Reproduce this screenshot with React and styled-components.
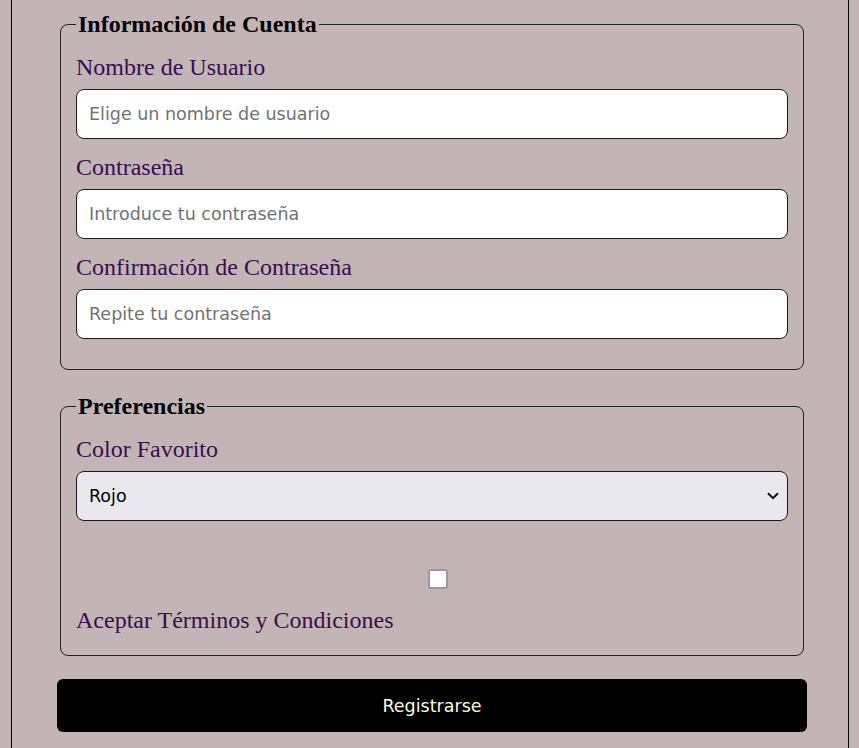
import React from "react";
import styled, { createGlobalStyle } from "styled-components";

const GlobalStyle = createGlobalStyle`
    body {
        margin : 0;
        background : #c3b5b5;
    }
`

const Page = styled.div`
    margin-left : 11px;
    width : 838px;
    box-sizing : border-box;
    min-height : 100vh;
    padding : 11px 41px 16px 45px;
    border-left : 1px solid #000;
    border-right : 1px solid #000;
`

const Fieldset = styled.fieldset`
    margin : 0 3px 23px;
    padding : 16px 15px 15px;
    border : 1px solid #222;
    border-radius : 8px;
    min-width : 0;
`

const Legend = styled.legend`
    padding : 0 2px;
    font-family : "Liberation Serif", "Times New Roman", serif;
    font-weight : 700;
    font-size : 24px;
    color : #000;
`

const Field = styled.div`
    margin-bottom : ${(p) => p.$last ? "6px" : "15px"};
`

const Label = styled.label`
    display : block;
    margin-bottom : 8px;
    font-family : "Liberation Serif", "Times New Roman", serif;
    font-size : 24px;
    color : #3a0d4f;
`

const Input = styled.input`
    display : block;
    width : 100%;
    height : 50px;
    box-sizing : border-box;
    padding : 0 12px;
    border : 1px solid #1a1a1a;
    border-radius : 8px;
    background : #fff;
    font-family : "DejaVu Sans", Verdana, sans-serif;
    font-size : 17.5px;
    color : #000;
    &::placeholder {
        color : #727272;
    }
`

const SelectWrap = styled.div`
    position : relative;
`

const Select = styled.select`
    display : block;
    width : 100%;
    height : 50px;
    box-sizing : border-box;
    padding : 0 12px;
    appearance : none;
    border : 1px solid #1a1a1a;
    border-radius : 8px;
    background : #e9e8ee;
    font-family : "DejaVu Sans", Verdana, sans-serif;
    font-size : 17.5px;
    color : #000;
`

const Chevron = styled.svg`
    position : absolute;
    right : 9px;
    top : 21px;
    pointer-events : none;
`

const CheckRow = styled.div`
    display : flex;
    justify-content : center;
    padding : 33px 0 0 12px;
    margin-bottom : 18px;
`

const Checkbox = styled.input`
    appearance : none;
    margin : 0;
    width : 20px;
    height : 20px;
    box-sizing : border-box;
    border : 2px solid #9b97a8;
    border-radius : 3px;
    background : #fff;
`

const TermsLabel = styled(Label)`
    margin-bottom : 0;
`

const Button = styled.button`
    display : block;
    width : 100%;
    height : 53px;
    border : none;
    border-radius : 6px;
    background : #000;
    color : #fdfbe2;
    font-family : "DejaVu Sans", Verdana, sans-serif;
    font-size : 17.5px;
    cursor : pointer;
`

const App = () => {
    return (
        <>
            <GlobalStyle />
            <Page>
                <form onSubmit={(e) => e.preventDefault()}>
                    <Fieldset>
                        <Legend>Información de Cuenta</Legend>
                        <Field>
                            <Label htmlFor="usuario">Nombre de Usuario</Label>
                            <Input id="usuario" type="text" placeholder="Elige un nombre de usuario" />
                        </Field>
                        <Field>
                            <Label htmlFor="pass">Contraseña</Label>
                            <Input id="pass" type="password" placeholder="Introduce tu contraseña" />
                        </Field>
                        <Field>
                            <Label htmlFor="pass2">Confirmación de Contraseña</Label>
                            <Input id="pass2" type="password" placeholder="Repite tu contraseña" />
                        </Field>
                    </Fieldset>

                    <Fieldset>
                        <Legend>Preferencias</Legend>
                        <Field>
                            <Label htmlFor="color">Color Favorito</Label>
                            <SelectWrap>
                                <Select id="color" defaultValue="rojo">
                                    <option value="rojo">Rojo</option>
                                    <option value="verde">Verde</option>
                                    <option value="azul">Azul</option>
                                </Select>
                                <Chevron width="12" height="8" viewBox="0 0 12 8">
                                    <path d="M1 1.2 L6 6.2 L11 1.2" fill="none" stroke="#111" strokeWidth="2" />
                                </Chevron>
                            </SelectWrap>
                        </Field>
                        <Field $last>
                            <CheckRow>
                                <Checkbox id="terminos" type="checkbox" />
                            </CheckRow>
                            <TermsLabel htmlFor="terminos">Aceptar Términos y Condiciones</TermsLabel>
                        </Field>
                    </Fieldset>

                    <Button type="submit">Registrarse</Button>
                </form>
            </Page>
        </>
    )
}

export default App
